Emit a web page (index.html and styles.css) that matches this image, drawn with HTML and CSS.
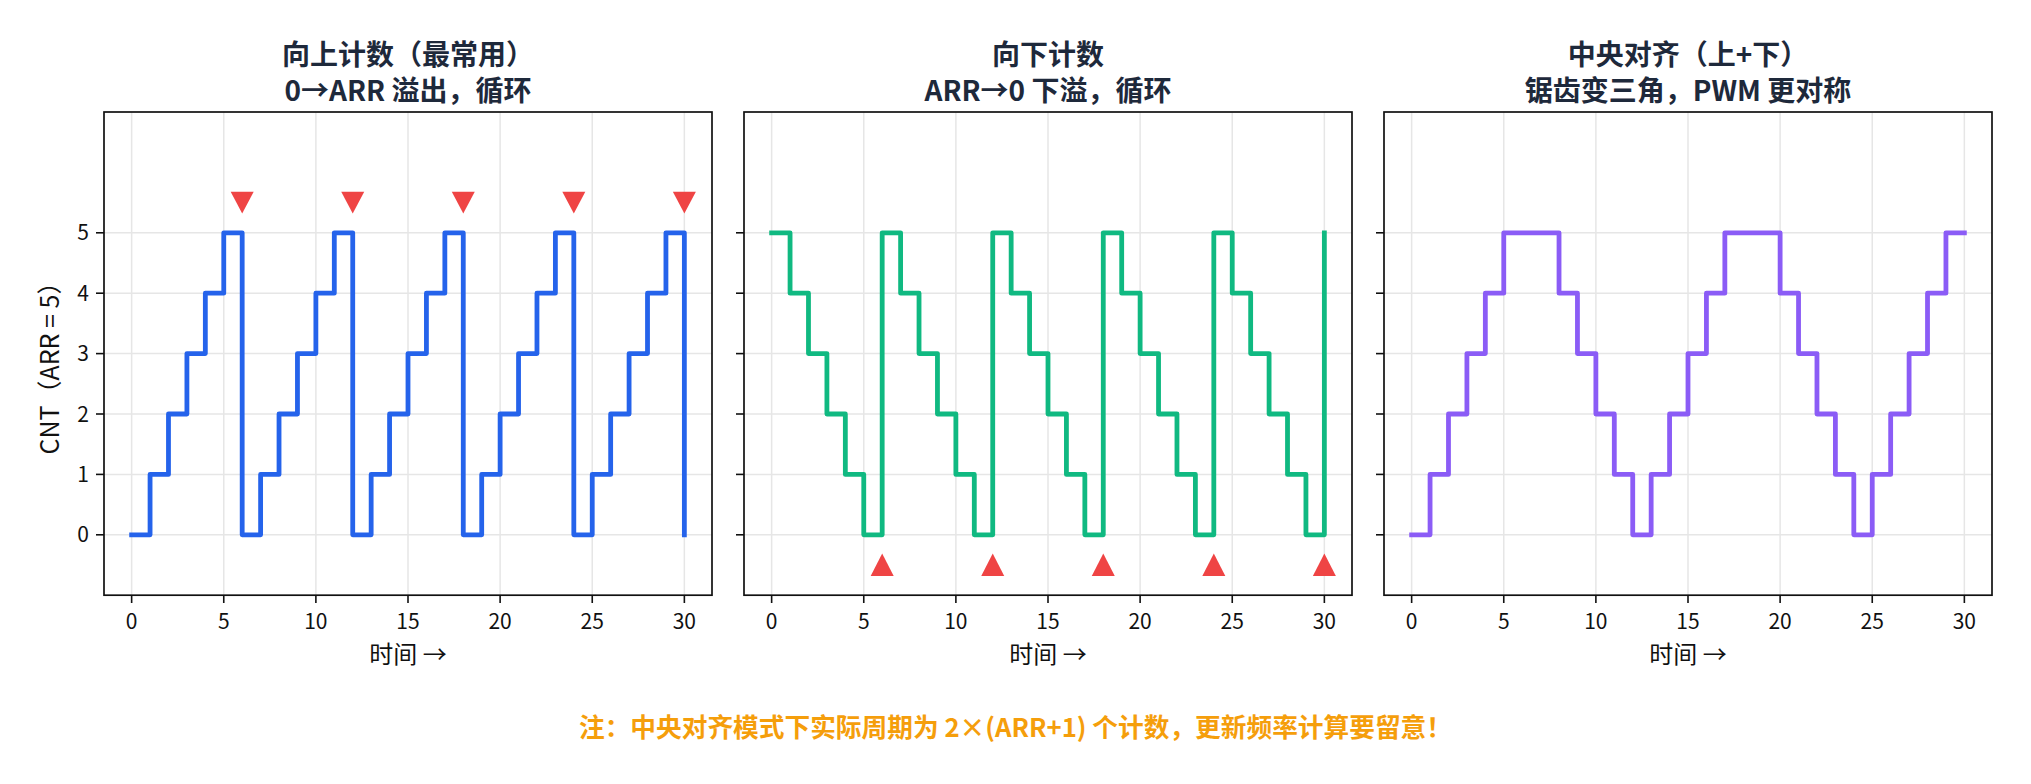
FILE: index.html
```html
<!DOCTYPE html>
<html lang="zh-CN">
<head>
<meta charset="utf-8">
<title>定时器计数模式</title>
<link rel="stylesheet" href="styles.css">
</head>
<body>
<div class="figure">
  <div class="panels">
    <section class="panel">
      <h2 class="title">向上计数（最常用）<br>0→ARR 溢出，循环</h2>
      <svg class="chart" width="608" height="526" viewBox="0 0 608 526">
        <g class="grid">
          <line x1="27.64" y1="0" x2="27.64" y2="483.2"/><line x1="119.76" y1="0" x2="119.76" y2="483.2"/><line x1="211.88" y1="0" x2="211.88" y2="483.2"/><line x1="304" y1="0" x2="304" y2="483.2"/><line x1="396.12" y1="0" x2="396.12" y2="483.2"/><line x1="488.24" y1="0" x2="488.24" y2="483.2"/><line x1="580.36" y1="0" x2="580.36" y2="483.2"/>
          <line x1="0" y1="422.8" x2="608" y2="422.8"/><line x1="0" y1="362.4" x2="608" y2="362.4"/><line x1="0" y1="302" x2="608" y2="302"/><line x1="0" y1="241.6" x2="608" y2="241.6"/><line x1="0" y1="181.2" x2="608" y2="181.2"/><line x1="0" y1="120.8" x2="608" y2="120.8"/>
        </g>
        <g transform="translate(27.64 422.8) scale(18.424 -60.4)">
          <path class="series up" d="M0 0H1V1H2V2H3V3H4V4H5V5H6V0H7V1H8V2H9V3H10V4H11V5H12V0H13V1H14V2H15V3H16V4H17V5H18V0H19V1H20V2H21V3H22V4H23V5H24V0H25V1H26V2H27V3H28V4H29V5H30V0"/>
        </g>
        <g class="marker">
          <polygon points="126.68,79.8 149.68,79.8 138.18,101.4"/><polygon points="237.23,79.8 260.23,79.8 248.73,101.4"/><polygon points="347.77,79.8 370.77,79.8 359.27,101.4"/><polygon points="458.32,79.8 481.32,79.8 469.82,101.4"/><polygon points="568.86,79.8 591.86,79.8 580.36,101.4"/>
        </g>
        <rect class="spine" x="0" y="0" width="608" height="483.2"/>
        <g class="tick">
          <line x1="27.64" y1="483.2" x2="27.64" y2="491"/><line x1="119.76" y1="483.2" x2="119.76" y2="491"/><line x1="211.88" y1="483.2" x2="211.88" y2="491"/><line x1="304" y1="483.2" x2="304" y2="491"/><line x1="396.12" y1="483.2" x2="396.12" y2="491"/><line x1="488.24" y1="483.2" x2="488.24" y2="491"/><line x1="580.36" y1="483.2" x2="580.36" y2="491"/>
          <line x1="0" y1="422.8" x2="-8" y2="422.8"/><line x1="0" y1="362.4" x2="-8" y2="362.4"/><line x1="0" y1="302" x2="-8" y2="302"/><line x1="0" y1="241.6" x2="-8" y2="241.6"/><line x1="0" y1="181.2" x2="-8" y2="181.2"/><line x1="0" y1="120.8" x2="-8" y2="120.8"/>
        </g>
        <g class="ticklabel xl">
          <text x="27.64" y="517">0</text><text x="119.76" y="517">5</text><text x="211.88" y="517">10</text><text x="304" y="517">15</text><text x="396.12" y="517">20</text><text x="488.24" y="517">25</text><text x="580.36" y="517">30</text>
        </g>
        <g class="ticklabel yl">
          <text x="-15" y="430.4">0</text><text x="-15" y="370">1</text><text x="-15" y="309.6">2</text><text x="-15" y="249.2">3</text><text x="-15" y="188.8">4</text><text x="-15" y="128.4">5</text>
        </g>
        <text class="ylabel" transform="translate(-45 250) rotate(-90)">CNT（ARR = 5）</text>
      </svg>
      <div class="xlabel">时间 →</div>
    </section>

    <section class="panel">
      <h2 class="title">向下计数<br>ARR→0 下溢，循环</h2>
      <svg class="chart" width="608" height="526" viewBox="0 0 608 526">
        <g class="grid">
          <line x1="27.64" y1="0" x2="27.64" y2="483.2"/><line x1="119.76" y1="0" x2="119.76" y2="483.2"/><line x1="211.88" y1="0" x2="211.88" y2="483.2"/><line x1="304" y1="0" x2="304" y2="483.2"/><line x1="396.12" y1="0" x2="396.12" y2="483.2"/><line x1="488.24" y1="0" x2="488.24" y2="483.2"/><line x1="580.36" y1="0" x2="580.36" y2="483.2"/>
          <line x1="0" y1="422.8" x2="608" y2="422.8"/><line x1="0" y1="362.4" x2="608" y2="362.4"/><line x1="0" y1="302" x2="608" y2="302"/><line x1="0" y1="241.6" x2="608" y2="241.6"/><line x1="0" y1="181.2" x2="608" y2="181.2"/><line x1="0" y1="120.8" x2="608" y2="120.8"/>
        </g>
        <g transform="translate(27.64 422.8) scale(18.424 -60.4)">
          <path class="series down" d="M0 5H1V4H2V3H3V2H4V1H5V0H6V5H7V4H8V3H9V2H10V1H11V0H12V5H13V4H14V3H15V2H16V1H17V0H18V5H19V4H20V3H21V2H22V1H23V0H24V5H25V4H26V3H27V2H28V1H29V0H30V5"/>
        </g>
        <g class="marker">
          <polygon points="126.68,464 149.68,464 138.18,441.6"/><polygon points="237.23,464 260.23,464 248.73,441.6"/><polygon points="347.77,464 370.77,464 359.27,441.6"/><polygon points="458.32,464 481.32,464 469.82,441.6"/><polygon points="568.86,464 591.86,464 580.36,441.6"/>
        </g>
        <rect class="spine" x="0" y="0" width="608" height="483.2"/>
        <g class="tick">
          <line x1="27.64" y1="483.2" x2="27.64" y2="491"/><line x1="119.76" y1="483.2" x2="119.76" y2="491"/><line x1="211.88" y1="483.2" x2="211.88" y2="491"/><line x1="304" y1="483.2" x2="304" y2="491"/><line x1="396.12" y1="483.2" x2="396.12" y2="491"/><line x1="488.24" y1="483.2" x2="488.24" y2="491"/><line x1="580.36" y1="483.2" x2="580.36" y2="491"/>
          <line x1="0" y1="422.8" x2="-8" y2="422.8"/><line x1="0" y1="362.4" x2="-8" y2="362.4"/><line x1="0" y1="302" x2="-8" y2="302"/><line x1="0" y1="241.6" x2="-8" y2="241.6"/><line x1="0" y1="181.2" x2="-8" y2="181.2"/><line x1="0" y1="120.8" x2="-8" y2="120.8"/>
        </g>
        <g class="ticklabel xl">
          <text x="27.64" y="517">0</text><text x="119.76" y="517">5</text><text x="211.88" y="517">10</text><text x="304" y="517">15</text><text x="396.12" y="517">20</text><text x="488.24" y="517">25</text><text x="580.36" y="517">30</text>
        </g>
      </svg>
      <div class="xlabel">时间 →</div>
    </section>

    <section class="panel">
      <h2 class="title">中央对齐（上+下）<br>锯齿变三角，PWM 更对称</h2>
      <svg class="chart" width="608" height="526" viewBox="0 0 608 526">
        <g class="grid">
          <line x1="27.64" y1="0" x2="27.64" y2="483.2"/><line x1="119.76" y1="0" x2="119.76" y2="483.2"/><line x1="211.88" y1="0" x2="211.88" y2="483.2"/><line x1="304" y1="0" x2="304" y2="483.2"/><line x1="396.12" y1="0" x2="396.12" y2="483.2"/><line x1="488.24" y1="0" x2="488.24" y2="483.2"/><line x1="580.36" y1="0" x2="580.36" y2="483.2"/>
          <line x1="0" y1="422.8" x2="608" y2="422.8"/><line x1="0" y1="362.4" x2="608" y2="362.4"/><line x1="0" y1="302" x2="608" y2="302"/><line x1="0" y1="241.6" x2="608" y2="241.6"/><line x1="0" y1="181.2" x2="608" y2="181.2"/><line x1="0" y1="120.8" x2="608" y2="120.8"/>
        </g>
        <g transform="translate(27.64 422.8) scale(18.424 -60.4)">
          <path class="series center" d="M0 0H1V1H2V2H3V3H4V4H5V5H8V4H9V3H10V2H11V1H12V0H13V1H14V2H15V3H16V4H17V5H20V4H21V3H22V2H23V1H24V0H25V1H26V2H27V3H28V4H29V5H30"/>
        </g>
        <rect class="spine" x="0" y="0" width="608" height="483.2"/>
        <g class="tick">
          <line x1="27.64" y1="483.2" x2="27.64" y2="491"/><line x1="119.76" y1="483.2" x2="119.76" y2="491"/><line x1="211.88" y1="483.2" x2="211.88" y2="491"/><line x1="304" y1="483.2" x2="304" y2="491"/><line x1="396.12" y1="483.2" x2="396.12" y2="491"/><line x1="488.24" y1="483.2" x2="488.24" y2="491"/><line x1="580.36" y1="483.2" x2="580.36" y2="491"/>
          <line x1="0" y1="422.8" x2="-8" y2="422.8"/><line x1="0" y1="362.4" x2="-8" y2="362.4"/><line x1="0" y1="302" x2="-8" y2="302"/><line x1="0" y1="241.6" x2="-8" y2="241.6"/><line x1="0" y1="181.2" x2="-8" y2="181.2"/><line x1="0" y1="120.8" x2="-8" y2="120.8"/>
        </g>
        <g class="ticklabel xl">
          <text x="27.64" y="517">0</text><text x="119.76" y="517">5</text><text x="211.88" y="517">10</text><text x="304" y="517">15</text><text x="396.12" y="517">20</text><text x="488.24" y="517">25</text><text x="580.36" y="517">30</text>
        </g>
      </svg>
      <div class="xlabel">时间 →</div>
    </section>
  </div>
  <p class="note">注：中央对齐模式下实际周期为 2×(ARR+1) 个计数，更新频率计算要留意！</p>
</div>
</body>
</html>
```

FILE: styles.css
```css
* { box-sizing: border-box; }

html, body {
  margin: 0;
  padding: 0;
  background: #ffffff;
}

body {
  font-family: "Noto Sans CJK SC", "Noto Sans", sans-serif;
  color: #111111;
}

.figure {
  width: 2031px;
  height: 784px;
  padding-top: 35px;
  overflow: hidden;
}

.panels {
  display: flex;
  gap: 32px;
  padding-left: 104px;
}

.panel {
  width: 608px;
  display: flex;
  flex-direction: column;
  align-items: center;
}

.title {
  margin: 0 0 5px;
  font-size: 28px;
  line-height: 36px;
  font-weight: 700;
  color: #1e293b;
  text-align: center;
  white-space: nowrap;
}

.chart {
  display: block;
  overflow: visible;
}

.grid line {
  stroke: #e6e6e6;
  stroke-width: 1.5;
}

.spine {
  fill: none;
  stroke: #111111;
  stroke-width: 1.7;
}

.tick line {
  stroke: #111111;
  stroke-width: 1.6;
}

.ticklabel text {
  font-family: "Noto Sans CJK SC", "Noto Sans", sans-serif;
  font-size: 21px;
  fill: #111111;
}

.xl text { text-anchor: middle; }
.yl text { text-anchor: end; }

.ylabel {
  font-family: "Noto Sans CJK SC", "Noto Sans", sans-serif;
  font-size: 25px;
  fill: #111111;
  text-anchor: middle;
}

.series {
  fill: none;
  stroke-width: 4.8;
  stroke-linejoin: round;
  stroke-linecap: square;
  vector-effect: non-scaling-stroke;
}

.series.up { stroke: #2563eb; }
.series.down { stroke: #10b981; }
.series.center { stroke: #8b5cf6; }

.marker polygon { fill: #ef4444; }

.xlabel {
  font-size: 24px;
  line-height: 30px;
  color: #111111;
  white-space: nowrap;
}

.note {
  margin: 40px 0 0;
  font-size: 25.7px;
  line-height: 36px;
  font-weight: 700;
  color: #f59e0b;
  text-align: center;
}
```
